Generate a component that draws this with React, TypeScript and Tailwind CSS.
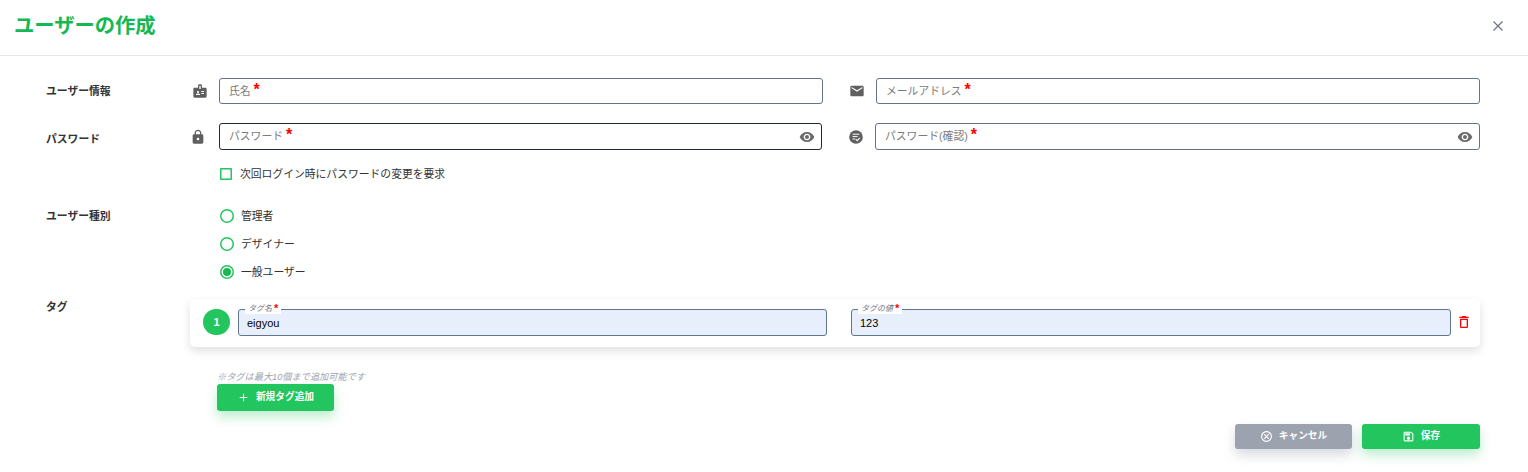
import { MdBadge, MdEmail, MdLock, MdVisibility, MdDeleteOutline, MdOutlineSave, MdOutlineCancel, MdAdd } from "react-icons/md";

const font = { fontFamily: '"Liberation Sans","Noto Sans CJK JP",sans-serif' };

function Star() {
    return <span className="text-[16px] font-bold leading-none text-[#ff0000] ml-[3px] -mt-[3px]">*</span>;
}

// Text input with the label sitting inside as a placeholder
function Field({ label, eye, dark, className }: { label: string; eye?: boolean; dark?: boolean; className: string }) {
    return (
        <div className={`flex items-center justify-between rounded-[3px] border pl-[9px] pr-[6px] ${dark ? "border-[#1f2937]" : "border-[#64748b]"} ${className}`}>
            <div className="flex items-center text-[10.8px] text-[#7b7b7b]">
                {label}
                <Star />
            </div>
            {eye && <MdVisibility className="h-[16px] w-[16px] text-[#6b6b6b]" />}
        </div>
    );
}

function ConfirmIcon() {
    return (
        <svg viewBox="0 0 16 16" className="h-[16px] w-[16px]">
            <circle cx="8" cy="8" r="6.8" fill="#5f5f5f" />
            <path d="M4.6 5.2h6.8M4.6 7.6h5M4.6 10h2.4" stroke="#fff" strokeWidth="1" fill="none" />
            <path d="M7.6 10.2l1.6 1.5 2.6-2.8" stroke="#fff" strokeWidth="1.1" fill="none" />
        </svg>
    );
}

function Radio({ label, checked }: { label: string; checked?: boolean }) {
    return (
        <label className="flex h-[14px] items-center gap-[7px] text-[10.8px] text-[#333]">
            <span className="flex h-[14px] w-[14px] items-center justify-center rounded-full shadow-[inset_0_0_0_1.5px_#22c55e]">
                {checked && <span className="h-[8px] w-[8px] rounded-full bg-[#16b853]" />}
            </span>
            {label}
        </label>
    );
}

function TagField({ label, value, className }: { label: string; value: string; className: string }) {
    return (
        <div className={`relative flex h-[27px] items-center rounded-[3px] border border-[#64748b] bg-[#e8effc] pl-[8px] pt-[1px] text-[11px] text-black ${className}`}>
            <span className="absolute -top-[6px] left-[6px] flex h-[10px] items-center bg-white px-[3px] text-[8px] italic text-[#6b7280]">
                {label}
                <span className="ml-[2px] -mt-[2px] text-[11px] font-bold leading-none text-[#ff0000] not-italic">*</span>
            </span>
            {value}
        </div>
    );
}

export default function App() {
    return (
        <div className="h-[472px] w-[1528px] overflow-hidden bg-white" style={font}>
            <header className="flex h-[56px] items-center justify-between border-b border-[#e5e7eb] pb-[2px] pl-[14px] pr-[24px]">
                <h1 className="text-[20.3px] font-bold text-[#16b853]">ユーザーの作成</h1>
                <svg viewBox="0 0 12 12" className="-mt-[2px] h-[12px] w-[12px]">
                    <path d="M1.5 1.5l9 9M10.5 1.5l-9 9" stroke="#6b7280" strokeWidth="1.2" fill="none" />
                </svg>
            </header>

            <main className="pl-[46px] pr-[48px] pt-[22px]">
                {/* user info */}
                <div className="flex items-center">
                    <div className="w-[146px] text-[10.8px] font-semibold text-[#333]">ユーザー情報</div>
                    <MdBadge className="h-[16px] w-[16px] text-[#5f5f5f]" />
                    <Field label="氏名" className="ml-[11px] h-[26px] w-[604px]" />
                    <MdEmail className="ml-[26px] h-[16px] w-[16px] text-[#5f5f5f]" />
                    <Field label="メールアドレス" className="ml-[11px] h-[26px] w-[604px]" />
                </div>

                {/* password */}
                <div className="mt-[19px] flex items-center">
                    <div className="mt-[6px] w-[144px] text-[10.8px] font-semibold text-[#333]">パスワード</div>
                    <MdLock className="h-[16px] w-[16px] text-[#5f5f5f]" />
                    <Field label="パスワード" eye dark className="ml-[13px] h-[27px] w-[603px]" />
                    <div className="ml-[26px]"><ConfirmIcon /></div>
                    <Field label="パスワード(確認)" eye className="ml-[11px] h-[27px] w-[605px]" />
                </div>

                <label className="ml-[174px] mt-[18px] flex h-[13px] items-center gap-[8px] text-[10.8px] text-[#333]">
                    <span className="-mt-[1px] h-[12px] w-[12px] rounded-[1px] shadow-[inset_0_0_0_1.5px_#22c55e]" />
                    次回ログイン時にパスワードの変更を要求
                </label>

                {/* user type */}
                <div className="mt-[28px] flex">
                    <div className="-mt-[1px] w-[174px] text-[10.8px] font-semibold text-[#333]">ユーザー種別</div>
                    <div className="flex flex-col gap-[14px]">
                        <Radio label="管理者" />
                        <Radio label="デザイナー" />
                        <Radio label="一般ユーザー" checked />
                    </div>
                </div>

                {/* tags */}
                <div className="mt-[20px] flex">
                    <div className="w-[144px] text-[10.8px] font-semibold text-[#333]">タグ</div>
                    <div className="flex h-[48px] flex-1 items-start rounded-[5px] bg-white pl-[13px] pt-[10px] shadow-[0_4px_10px_rgba(0,0,0,0.13)]">
                        <div className="flex h-[26px] w-[27px] items-center justify-center rounded-full bg-[#22c55e] text-[11px] font-bold text-white">1</div>
                        <TagField label="タグ名" value="eigyou" className="ml-[8px] w-[589px]" />
                        <TagField label="タグの値" value="123" className="ml-[24px] w-[600px]" />
                        <MdDeleteOutline className="ml-[5px] mt-[5px] h-[16px] w-[16px] text-[#ff0000]" />
                    </div>
                </div>

                <div className="ml-[171px] mt-[25px] text-[9.2px] italic leading-[11px] text-[#9ca3af]">※タグは最大10個まで追加可能です</div>
                <button className="ml-[171px] mt-[1px] flex h-[27px] w-[117px] items-center justify-center gap-[6px] rounded-[3px] bg-[#22c55e] text-[9.7px] font-bold text-white shadow-[0_6px_12px_rgba(34,197,94,0.3)]">
                    <MdAdd className="h-[13px] w-[13px]" />
                    新規タグ追加
                </button>

                <div className="mt-[13px] flex justify-end gap-[10px]">
                    <button className="flex h-[25px] w-[117px] items-center justify-center gap-[6px] rounded-[3px] bg-[#9ca3af] text-[9.7px] font-bold text-white shadow-[0_6px_12px_rgba(156,163,175,0.4)]">
                        <MdOutlineCancel className="h-[13px] w-[13px]" />
                        キャンセル
                    </button>
                    <button className="flex h-[25px] w-[118px] items-center justify-center gap-[6px] rounded-[3px] bg-[#22c55e] text-[9.7px] font-bold text-white shadow-[0_6px_12px_rgba(34,197,94,0.3)]">
                        <MdOutlineSave className="h-[13px] w-[13px]" />
                        保存
                    </button>
                </div>
            </main>
        </div>
    );
}
